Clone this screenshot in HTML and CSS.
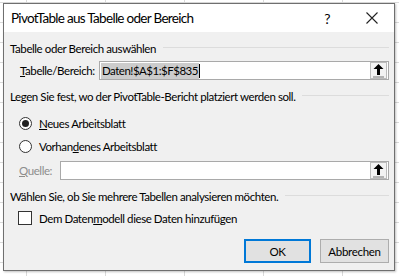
FILE: index.html
```html
<!DOCTYPE html>
<html lang="de">
<head>
    <meta charset="UTF-8">
    <meta name="viewport" content="width=device-width, initial-scale=1.0">
    <title>PivotTable aus Tabelle oder Bereich</title>
    <link rel="stylesheet" href="styles.css">
</head>
<body>
    <div class="dialog">
        <div class="titlebar">
            <span class="title">PivotTable aus Tabelle oder Bereich</span>
            <span class="help">?</span>
            <span class="close">
                <svg width="12" height="12" viewBox="0 0 12 12"><path d="M0.5 0.5 L11.5 11.5 M11.5 0.5 L0.5 11.5" stroke="#222" stroke-width="1.1" fill="none"/></svg>
            </span>
        </div>

        <div class="dialog-body">
            <div class="group-title"><span>Tabelle oder Bereich auswählen</span></div>
            <div class="field-row range-row">
                <label class="field-label"><u>T</u>abelle/Bereich:</label>
                <div class="ref-input">
                    <span class="ref-text"><span class="selected">Daten!$A$1:$F$835</span><span class="caret"></span></span>
                    <span class="ref-btn">
                        <svg width="13" height="15" viewBox="0 0 13 15"><path d="M6.5 1 L11.5 6 L8 6 L8 12 L5 12 L5 6 L1.5 6 Z" fill="#000"/><rect x="1" y="13.5" width="11" height="1" fill="#777"/></svg>
                    </span>
                </div>
            </div>

            <div class="group-title gap-lg"><span>Legen Sie fest, wo der PivotTable-Bericht platziert werden soll.</span></div>
            <div class="option first">
                <span class="radio checked"></span>
                <span><u>N</u>eues Arbeitsblatt</span>
            </div>
            <div class="option">
                <span class="radio"></span>
                <span>Vorhan<u>d</u>enes Arbeitsblatt</span>
            </div>
            <div class="field-row source-row">
                <label class="field-label disabled"><u>Q</u>uelle:</label>
                <div class="ref-input">
                    <span class="ref-text"></span>
                    <span class="ref-btn">
                        <svg width="13" height="15" viewBox="0 0 13 15"><path d="M6.5 1 L11.5 6 L8 6 L8 12 L5 12 L5 6 L1.5 6 Z" fill="#000"/><rect x="1" y="13.5" width="11" height="1" fill="#777"/></svg>
                    </span>
                </div>
            </div>

            <div class="group-title gap-md"><span>Wählen Sie, ob Sie mehrere Tabellen analysieren möchten.</span></div>
            <div class="option check-row">
                <span class="checkbox"></span>
                <span>Dem Daten<u>m</u>odell diese Daten hinzufügen</span>
            </div>

            <div class="buttons">
                <button class="btn default">OK</button>
                <button class="btn">Abbrechen</button>
            </div>
            <span class="grip"></span>
        </div>
    </div>
</body>
</html>
```

FILE: styles.css
```css
body {
    margin: 0;
    width: 399px;
    height: 276px;
    overflow: hidden;
    font-family: 'Lato', 'Noto Sans', sans-serif;
    font-size: 11.5px;
    letter-spacing: -0.42px;
    color: #000;
    background-color: #fff;
    background-image:
        linear-gradient(to right, #dadada 1px, transparent 1px),
        linear-gradient(to bottom, #dadada 1px, transparent 1px);
    background-size: 79px 20px;
    background-position: 26px 2px;
}
.dialog {
    margin: 3px 0 0 3px;
    width: 390px;
    border: 1px solid #6f6f6f;
    box-shadow: 1px 1px 2px rgba(0, 0, 0, 0.25);
    background: #f0f0f0;
}
.titlebar {
    height: 28px;
    background: #fff;
    display: flex;
    align-items: center;
}
.title {
    flex-grow: 1;
    padding-left: 7px;
    font-size: 13.5px;
    letter-spacing: -0.7px;
}
.help {
    font-size: 14px;
    margin-right: 36px;
}
.close {
    display: flex;
    margin-right: 16px;
}
.dialog-body {
    padding: 8px 5px 7px 6px;
    position: relative;
}
.group-title {
    display: flex;
    align-items: center;
    height: 16px;
}
.group-title::after {
    content: '';
    flex-grow: 1;
    height: 1px;
    background: #dcdcdc;
    margin-left: 7px;
    margin-top: -1px;
}
.gap-lg {
    margin-top: 8px;
}
.gap-md {
    margin-top: 8px;
}
.field-row {
    display: flex;
    align-items: center;
    height: 19px;
}
.range-row {
    margin-top: 5px;
    padding-left: 10px;
}
.source-row {
    margin-top: 7px;
    padding-left: 9px;
}
.field-label {
    width: 79px;
}
.source-row .field-label {
    width: 41px;
}
.disabled {
    color: #8d8d8d;
}
.ref-input {
    flex-grow: 1;
    height: 17px;
    background: #fff;
    border: 1px solid #a9a9a9;
    display: flex;
    align-items: center;
}
.ref-text {
    flex-grow: 1;
    padding-left: 1px;
    display: flex;
    align-items: center;
    height: 100%;
}
.selected {
    background: #cccccc;
    line-height: 16px;
    padding: 0 1px;
    letter-spacing: -0.5px;
}
.caret {
    width: 1px;
    height: 14px;
    background: #000;
}
.ref-btn {
    width: 15px;
    height: 15px;
    margin-right: 1px;
    border: 1px solid #bcbcbc;
    background: #f3f3f3;
    display: flex;
    align-items: center;
    justify-content: center;
}
.option {
    display: flex;
    align-items: center;
    height: 16px;
    margin-top: 7px;
    padding-left: 9px;
}
.option.first {
    margin-top: 11px;
}
.check-row {
    margin-top: 6px;
    padding-left: 8px;
}
.radio {
    width: 11px;
    height: 11px;
    border: 1px solid #333;
    border-radius: 50%;
    background: #fff;
    margin-right: 7px;
    display: flex;
    align-items: center;
    justify-content: center;
}
.radio.checked::after {
    content: '';
    width: 7px;
    height: 7px;
    border-radius: 50%;
    background: #222;
}
.checkbox {
    width: 12px;
    height: 12px;
    border: 1px solid #333;
    background: #fff;
    margin-right: 7px;
}
.buttons {
    display: flex;
    justify-content: flex-end;
    gap: 9px;
    margin-top: 13px;
}
.btn {
    font-family: inherit;
    font-size: 11.5px;
    letter-spacing: -0.3px;
    height: 24px;
    background: #e1e1e1;
    border: 1px solid #adadad;
    padding: 0;
    color: #000;
}
.btn.default {
    width: 67px;
    border: 1px solid #0078d7;
    box-shadow: inset 0 0 0 1px #0078d7;
}
.btn:last-child {
    width: 69px;
}
.grip {
    position: absolute;
    right: 1px;
    bottom: 1px;
    width: 6px;
    height: 6px;
    background-image: radial-gradient(#a0a0a0 45%, transparent 50%);
    background-size: 2px 2px;
}
```
